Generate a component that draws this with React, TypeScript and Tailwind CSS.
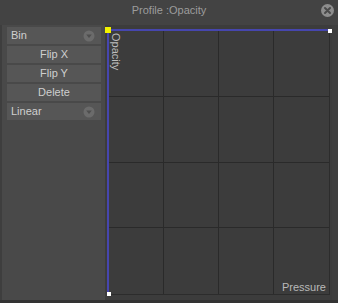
const font = { fontFamily: '"Liberation Sans", Arial, sans-serif' };

function DropIcon() {
  return (
    <svg width="12" height="12" viewBox="0 0 12 12">
      <circle cx="6" cy="6" r="5.5" fill="#6b6b6b" />
      <path d="M3.2 4.6 L8.8 4.6 L6 8 Z" fill="#4e4e4e" />
    </svg>
  );
}

function Row({ label, drop }: { label: string; drop?: boolean }) {
  return (
    <div
      className={
        "h-[17px] bg-[#565656] flex items-center text-[11px] text-[#cfcfcf] " +
        (drop ? "justify-between pl-[4px] pr-[6px]" : "justify-center")
      }
    >
      <span>{label}</span>
      {drop && <DropIcon />}
    </div>
  );
}

export default function App() {
  return (
    <div className="w-[338px] h-[303px] bg-[#3e3e3e] flex flex-col" style={font}>
      {/* title bar */}
      <div className="h-[25px] bg-[#434343] relative flex items-center justify-center">
        <span className="text-[11px] text-[#9c9c9c] pb-[5px]">Profile :Opacity</span>
        <svg className="absolute right-[4px] top-[4px]" width="13" height="13" viewBox="0 0 13 13">
          <circle cx="6.5" cy="6.5" r="6.5" fill="#8d8d8d" />
          <path d="M4 4 L9 9 M9 4 L4 9" stroke="#4a4a4a" strokeWidth="2" strokeLinecap="round" />
        </svg>
      </div>

      <div className="flex h-[275px]">
        {/* side panel */}
        <div className="w-[103px] ml-[2px] bg-[#494949] pl-[5px] pr-[4px] pt-[2px] flex flex-col gap-[2px]">
          <Row label="Bin" drop />
          <Row label="Flip X" />
          <Row label="Flip Y" />
          <Row label="Delete" />
          <Row label="Linear" drop />
        </div>

        {/* graph */}
        <div className="w-[227px] bg-[#3c3c3c] pl-[2px] pt-[4px]">
          <div className="relative w-[223px] h-[266px] border-l-2 border-t-2 border-l-[#4646ae] border-t-[#4646ae] border-r border-b border-r-[#2c2c2c] border-b-[#2c2c2c]">
            <div className="grid grid-cols-4 grid-rows-4 h-full">
              {Array.from({ length: 16 }).map((_, i) => (
                <div
                  key={i}
                  className={
                    (i % 4 !== 3 ? "border-r border-r-[#2a2a2a] " : "") +
                    (i < 12 ? "border-b border-b-[#2a2a2a]" : "")
                  }
                />
              ))}
            </div>
            <span
              className="absolute left-[1px] top-[2px] text-[11px] text-[#bdbdbd] leading-none"
              style={{ writingMode: "vertical-rl" }}
            >
              Opacity
            </span>
            <span className="absolute right-[3px] bottom-[1px] text-[11px] text-[#b9b9b9] leading-none">
              Pressure
            </span>
            <div className="absolute left-[-4px] top-[-4px] w-[6px] h-[6px] bg-[#f2f200]" />
            <div className="absolute left-[219px] top-[-2px] w-[4px] h-[4px] bg-white" />
            <div className="absolute left-[-2px] bottom-[-2px] w-[4px] h-[4px] bg-white" />
          </div>
        </div>
      </div>
      <div className="flex-1 bg-[#333]" />
    </div>
  );
}
